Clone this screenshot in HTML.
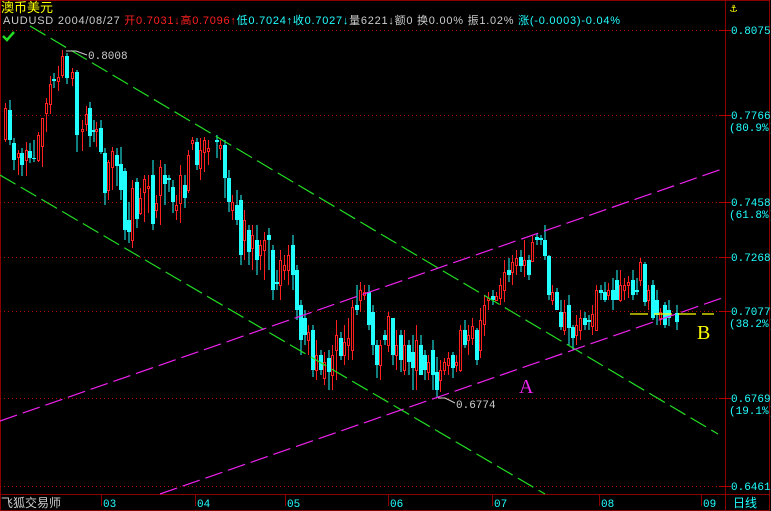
<!DOCTYPE html>
<html><head><meta charset="utf-8"><style>
html,body{margin:0;padding:0;background:#000;width:771px;height:511px;overflow:hidden}
svg{display:block}
text{font-family:"Liberation Mono","Noto Sans CJK SC",monospace;font-size:11px}
.c{font-family:"Liberation Sans","Noto Sans CJK SC",sans-serif}
</style></head><body>
<svg width="771" height="511" viewBox="0 0 771 511">
<rect x="0" y="0" width="771" height="511" fill="#000"/>
<g stroke="#8b0000" fill="none" stroke-width="1">
<rect x="0.5" y="0.5" width="769" height="510"/>
<line x1="725.5" y1="0" x2="725.5" y2="511"/>
<line x1="0" y1="494.5" x2="770" y2="494.5"/>
<line x1="101.5" y1="494" x2="101.5" y2="506"/><line x1="195.5" y1="494" x2="195.5" y2="506"/>
<line x1="285.5" y1="494" x2="285.5" y2="506"/><line x1="388.5" y1="494" x2="388.5" y2="506"/>
<line x1="492.5" y1="494" x2="492.5" y2="506"/><line x1="599.5" y1="494" x2="599.5" y2="506"/>
<line x1="701.5" y1="494" x2="701.5" y2="506"/>
</g>
<g stroke="#b00000" stroke-dasharray="1,3" stroke-width="1">
<line x1="0" y1="30.5" x2="725" y2="30.5"/><line x1="0" y1="115.5" x2="725" y2="115.5"/>
<line x1="0" y1="202.5" x2="725" y2="202.5"/><line x1="0" y1="257.5" x2="725" y2="257.5"/>
<line x1="0" y1="311.5" x2="725" y2="311.5"/><line x1="0" y1="398.5" x2="725" y2="398.5"/>
<line x1="0" y1="486.5" x2="725" y2="486.5"/>
</g>
<g stroke="#b00000"><line x1="719" y1="30.5" x2="731" y2="30.5"/><line x1="719" y1="115.5" x2="731" y2="115.5"/><line x1="719" y1="202.5" x2="731" y2="202.5"/><line x1="719" y1="257.5" x2="731" y2="257.5"/><line x1="719" y1="311.5" x2="731" y2="311.5"/><line x1="719" y1="398.5" x2="731" y2="398.5"/><line x1="719" y1="486.5" x2="731" y2="486.5"/></g>

<path stroke="#22ffff" fill="none" d="M10 100V145M14 138V170M22 148V176M30 143V163M34 140V162M54 73V88M67 53V84M77 70V152M90 102V147M94 120V142M101 120V154M105 148V205M117 148V186M121 147V200M125 168V240M129 202V243M137 178V228M153 160V230M165 164V205M169 175V192M173 180V213M185 175V208M197 138V170M217 135V158M225 140V198M229 170V212M237 190V225M241 195V265M249 225V265M257 225V275M269 228V270M273 245V300M277 270V290M293 235V290M297 265V320M301 300V355M305 310V345M313 325V377M321 350V375M329 350V390M341 332V360M357 285V315M369 285V330M373 305V355M377 340V378M385 330V345M393 318V365M401 330V372M409 340V375M413 335V390M421 335V375M425 350V380M433 340V390M437 357V397M453 352V378M465 320V348M477 328V365M493 290V305M509 258V282M521 250V272M529 255V280M537 233V245M541 235V245M545 225V260M549 255V300M557 288V310M561 300V330M569 295V345M573 325V350M585 312V330M589 315V330M601 285V300M605 282V302M613 278V310M617 270V300M633 270V300M637 278V295M645 262V306M653 280V320M657 290V325M665 302V328M669 300V326M677 305V330"/>
<g fill="#22ffff">
<rect x="8" y="110" width="4" height="30"/><rect x="12" y="143" width="4" height="17"/><rect x="20" y="153" width="4" height="12"/><rect x="28" y="151" width="4" height="7"/><rect x="32" y="158" width="4" height="1"/><rect x="52" y="79" width="4" height="2"/><rect x="65" y="56" width="4" height="22"/><rect x="75" y="72" width="4" height="63"/><rect x="88" y="108" width="4" height="28"/><rect x="92" y="130" width="4" height="2"/><rect x="99" y="128" width="4" height="24"/><rect x="103" y="153" width="4" height="40"/><rect x="115" y="155" width="4" height="11"/><rect x="119" y="164" width="4" height="26"/><rect x="123" y="171" width="4" height="59"/><rect x="127" y="220" width="4" height="12"/><rect x="135" y="182" width="4" height="37"/><rect x="151" y="175" width="4" height="49"/><rect x="163" y="175" width="4" height="9"/><rect x="167" y="178" width="4" height="2"/><rect x="171" y="187" width="4" height="15"/><rect x="183" y="185" width="4" height="13"/><rect x="195" y="142" width="4" height="23"/><rect x="215" y="140" width="4" height="2"/><rect x="223" y="145" width="4" height="33"/><rect x="227" y="178" width="4" height="24"/><rect x="235" y="205" width="4" height="15"/><rect x="239" y="200" width="4" height="55"/><rect x="247" y="230" width="4" height="22"/><rect x="255" y="240" width="4" height="20"/><rect x="267" y="235" width="4" height="5"/><rect x="271" y="250" width="4" height="40"/><rect x="275" y="282" width="4" height="2"/><rect x="291" y="245" width="4" height="30"/><rect x="295" y="270" width="4" height="40"/><rect x="299" y="305" width="4" height="35"/><rect x="303" y="318" width="4" height="17"/><rect x="311" y="330" width="4" height="40"/><rect x="319" y="355" width="4" height="15"/><rect x="327" y="358" width="4" height="14"/><rect x="339" y="338" width="4" height="18"/><rect x="355" y="305" width="4" height="5"/><rect x="367" y="292" width="4" height="33"/><rect x="371" y="312" width="4" height="33"/><rect x="375" y="345" width="4" height="20"/><rect x="383" y="335" width="4" height="5"/><rect x="391" y="318" width="4" height="37"/><rect x="399" y="335" width="4" height="25"/><rect x="407" y="345" width="4" height="17"/><rect x="411" y="352" width="4" height="16"/><rect x="419" y="345" width="4" height="30"/><rect x="423" y="355" width="4" height="15"/><rect x="431" y="350" width="4" height="25"/><rect x="435" y="372" width="4" height="18"/><rect x="451" y="355" width="4" height="13"/><rect x="463" y="330" width="4" height="15"/><rect x="475" y="330" width="4" height="30"/><rect x="491" y="296" width="4" height="4"/><rect x="507" y="270" width="4" height="5"/><rect x="519" y="257" width="4" height="9"/><rect x="527" y="260" width="4" height="15"/><rect x="535" y="237" width="4" height="3"/><rect x="539" y="238" width="4" height="2"/><rect x="543" y="240" width="4" height="16"/><rect x="547" y="256" width="4" height="39"/><rect x="555" y="292" width="4" height="18"/><rect x="559" y="312" width="4" height="15"/><rect x="567" y="305" width="4" height="23"/><rect x="571" y="327" width="4" height="11"/><rect x="583" y="318" width="4" height="7"/><rect x="587" y="320" width="4" height="2"/><rect x="599" y="290" width="4" height="3"/><rect x="603" y="292" width="4" height="8"/><rect x="611" y="290" width="4" height="10"/><rect x="615" y="280" width="4" height="20"/><rect x="631" y="280" width="4" height="15"/><rect x="635" y="290" width="4" height="2"/><rect x="643" y="264" width="4" height="38"/><rect x="651" y="285" width="4" height="33"/><rect x="655" y="300" width="4" height="15"/><rect x="663" y="305" width="4" height="20"/><rect x="667" y="310" width="4" height="8"/><rect x="675" y="313" width="4" height="9"/>
</g>

<path stroke="#ff2020" fill="none" d="M5.5 103V142M18.5 150V175M26.5 142V176M38.5 132V162M42.5 118V167M46.5 98V132M50.5 76V114M58.5 66V91M62.5 50V78M72.5 68V86M82.5 120V151M86.5 106V131M96.5 122V147M108.5 160V200M112.5 147V190M132.5 180V248M140.5 188V215M144.5 175V222M148.5 175V213M156.5 195V218M160.5 160V225M176.5 195V220M180.5 165V223M188.5 150V193M192.5 137V150M200.5 138V180M204.5 137V172M208.5 140V165M220.5 140V160M232.5 195V220M244.5 210V260M252.5 225V270M260.5 240V270M264.5 232V280M280.5 250V300M284.5 255V280M288.5 245V285M308.5 325V355M316.5 340V380M324.5 352V385M332.5 345V390M336.5 320V380M344.5 325V365M348.5 318V360M352.5 300V360M360.5 282V312M364.5 285V300M380.5 340V380M388.5 312V352M396.5 330V370M404.5 330V375M416.5 325V390M428.5 355V380M440.5 360V392M444.5 358V375M448.5 352V375M456.5 355V372M460.5 325V372M468.5 325V355M472.5 318V345M480.5 308V358M484.5 295V336M488.5 292V310M496.5 292V300M500.5 278V305M504.5 260V302M512.5 255V285M516.5 250V275M524.5 240V277M532.5 236V260M552.5 285V305M564.5 300V335M576.5 315V345M580.5 310V340M592.5 305V335M596.5 285V330M608.5 283V300M620.5 270V302M624.5 278V300M628.5 276V298M640.5 258V286M648.5 285V310M660.5 308V325"/>
<g fill="#000" stroke="#ff2020">
<rect x="4.5" y="108.5" width="2" height="31"/><rect x="17.5" y="153.5" width="2" height="4"/><rect x="25.5" y="150.5" width="2" height="10"/><rect x="37.5" y="135.5" width="2" height="25"/><rect x="41.5" y="118.5" width="2" height="28"/><rect x="45.5" y="103.5" width="2" height="10"/><rect x="49.5" y="84.5" width="2" height="20"/><rect x="57.5" y="77.5" width="2" height="4"/><rect x="61.5" y="56.5" width="2" height="19"/><rect x="71.5" y="72.5" width="2" height="6"/><rect x="81.5" y="129.5" width="2" height="2"/><rect x="85.5" y="114.5" width="2" height="10"/><rect x="95.5" y="129.5" width="2" height="2"/><rect x="107.5" y="162.5" width="2" height="28"/><rect x="111.5" y="151.5" width="2" height="16"/><rect x="131.5" y="188.5" width="2" height="52"/><rect x="139.5" y="198.5" width="2" height="15"/><rect x="143.5" y="179.5" width="2" height="13"/><rect x="147.5" y="186.5" width="2" height="2"/><rect x="155.5" y="203.5" width="2" height="7"/><rect x="159.5" y="167.5" width="2" height="28"/><rect x="175.5" y="205.5" width="2" height="5"/><rect x="179.5" y="175.5" width="2" height="28"/><rect x="187.5" y="155.5" width="2" height="35"/><rect x="191.5" y="140.5" width="2" height="3"/><rect x="199.5" y="150.5" width="2" height="18"/><rect x="203.5" y="140.5" width="2" height="12"/><rect x="207.5" y="148.5" width="2" height="3"/><rect x="219.5" y="145.5" width="2" height="3"/><rect x="231.5" y="202.5" width="2" height="8"/><rect x="243.5" y="220.5" width="2" height="20"/><rect x="251.5" y="235.5" width="2" height="13"/><rect x="259.5" y="245.5" width="2" height="10"/><rect x="263.5" y="240.5" width="2" height="10"/><rect x="279.5" y="260.5" width="2" height="25"/><rect x="283.5" y="265.5" width="2" height="5"/><rect x="287.5" y="255.5" width="2" height="15"/><rect x="307.5" y="332.5" width="2" height="8"/><rect x="315.5" y="355.5" width="2" height="15"/><rect x="323.5" y="362.5" width="2" height="16"/><rect x="331.5" y="355.5" width="2" height="20"/><rect x="335.5" y="335.5" width="2" height="15"/><rect x="343.5" y="342.5" width="2" height="13"/><rect x="347.5" y="338.5" width="2" height="7"/><rect x="351.5" y="307.5" width="2" height="43"/><rect x="359.5" y="290.5" width="2" height="10"/><rect x="363.5" y="292.5" width="2" height="3"/><rect x="379.5" y="345.5" width="2" height="20"/><rect x="387.5" y="316.5" width="2" height="29"/><rect x="395.5" y="345.5" width="2" height="10"/><rect x="403.5" y="345.5" width="2" height="25"/><rect x="415.5" y="340.5" width="2" height="30"/><rect x="427.5" y="362.5" width="2" height="10"/><rect x="439.5" y="370.5" width="2" height="10"/><rect x="443.5" y="362.5" width="2" height="8"/><rect x="447.5" y="358.5" width="2" height="7"/><rect x="455.5" y="362.5" width="2" height="3"/><rect x="459.5" y="330.5" width="2" height="40"/><rect x="467.5" y="335.5" width="2" height="5"/><rect x="471.5" y="326.5" width="2" height="12"/><rect x="479.5" y="320.5" width="2" height="30"/><rect x="483.5" y="305.5" width="2" height="19"/><rect x="487.5" y="298.5" width="2" height="2"/><rect x="495.5" y="296.5" width="2" height="4"/><rect x="499.5" y="285.5" width="2" height="13"/><rect x="503.5" y="272.5" width="2" height="18"/><rect x="511.5" y="262.5" width="2" height="10"/><rect x="515.5" y="258.5" width="2" height="7"/><rect x="523.5" y="260.5" width="2" height="5"/><rect x="531.5" y="242.5" width="2" height="19"/><rect x="551.5" y="292.5" width="2" height="8"/><rect x="563.5" y="312.5" width="2" height="18"/><rect x="575.5" y="325.5" width="2" height="10"/><rect x="579.5" y="318.5" width="2" height="12"/><rect x="591.5" y="314.5" width="2" height="12"/><rect x="595.5" y="290.5" width="2" height="40"/><rect x="607.5" y="290.5" width="2" height="5"/><rect x="619.5" y="285.5" width="2" height="15"/><rect x="623.5" y="285.5" width="2" height="5"/><rect x="627.5" y="282.5" width="2" height="3"/><rect x="639.5" y="262.5" width="2" height="18"/><rect x="647.5" y="290.5" width="2" height="10"/><rect x="659.5" y="312.5" width="2" height="6"/>
</g>

<g stroke-dasharray="18,6" stroke-width="1.2" fill="none">
<line x1="30" y1="26" x2="718" y2="434" stroke="#22dd22"/>
<line x1="0" y1="175" x2="545" y2="494" stroke="#22dd22"/>
<line x1="0" y1="421" x2="725" y2="168" stroke="#ee22ee"/>
<line x1="160" y1="494" x2="725" y2="297" stroke="#ee22ee"/>
<line x1="630" y1="314" x2="714" y2="314" stroke="#ffff00"/>
</g>
<polyline points="66,51 76,51 87,55" stroke="#ccc" fill="none"/>
<polyline points="438,398 445,398 455,403" stroke="#ccc" fill="none"/>
<text x="88" y="59" fill="#ccc">0.8008</text>
<text x="456" y="408" fill="#ccc">0.6774</text>
<text x="519" y="393" fill="#ee22ee" style="font-family:'Liberation Serif',serif;font-size:20px">A</text>
<text x="697" y="339" fill="#ffff00" style="font-family:'Liberation Serif',serif;font-size:20px">B</text>
<text x="1" y="12" fill="#ffff00" class="c" style="font-size:13px">澳币美元</text>
<text x="3" y="24" fill="#ccc" class="c" style="font-size:11px" textLength="617" lengthAdjust="spacing"><tspan>AUDUSD 2004/08/27 </tspan><tspan fill="#ff2020">开0.7031↓高0.7096↑</tspan><tspan fill="#22ffff">低0.7024↑收0.7027↓</tspan><tspan fill="#ccc">量6221↓额0 换0.00% 振1.02% </tspan><tspan fill="#22ffff">涨(-0.0003)-0.04%</tspan></text>
<path d="M3 36 L7 40 L14 32" stroke="#22dd22" stroke-width="2.5" fill="none"/>
<text x="730" y="12" fill="#ffff00" style="font-size:12px">⚓</text>
<g fill="#22ffff">
<text x="731" y="34">0.8075</text>
<text x="731" y="119">0.7766</text><text x="729" y="131">(80.9%)</text>
<text x="731" y="206">0.7458</text><text x="729" y="218">(61.8%)</text>
<text x="731" y="261">0.7268</text>
<text x="731" y="315">0.7077</text><text x="729" y="327">(38.2%)</text>
<text x="731" y="402">0.6769</text><text x="729" y="414">(19.1%)</text>
<text x="731" y="490">0.6461</text>
<text x="103" y="507">03</text><text x="197" y="507">04</text><text x="287" y="507">05</text>
<text x="390" y="507">06</text><text x="494" y="507">07</text><text x="601" y="507">08</text>
<text x="703" y="507">09</text>
<text x="733" y="507" class="c" style="font-size:12px">日线</text>
</g>
<text x="1" y="507" fill="#ccc" class="c" style="font-size:12px">飞狐交易师</text>
</svg>
</body></html>
